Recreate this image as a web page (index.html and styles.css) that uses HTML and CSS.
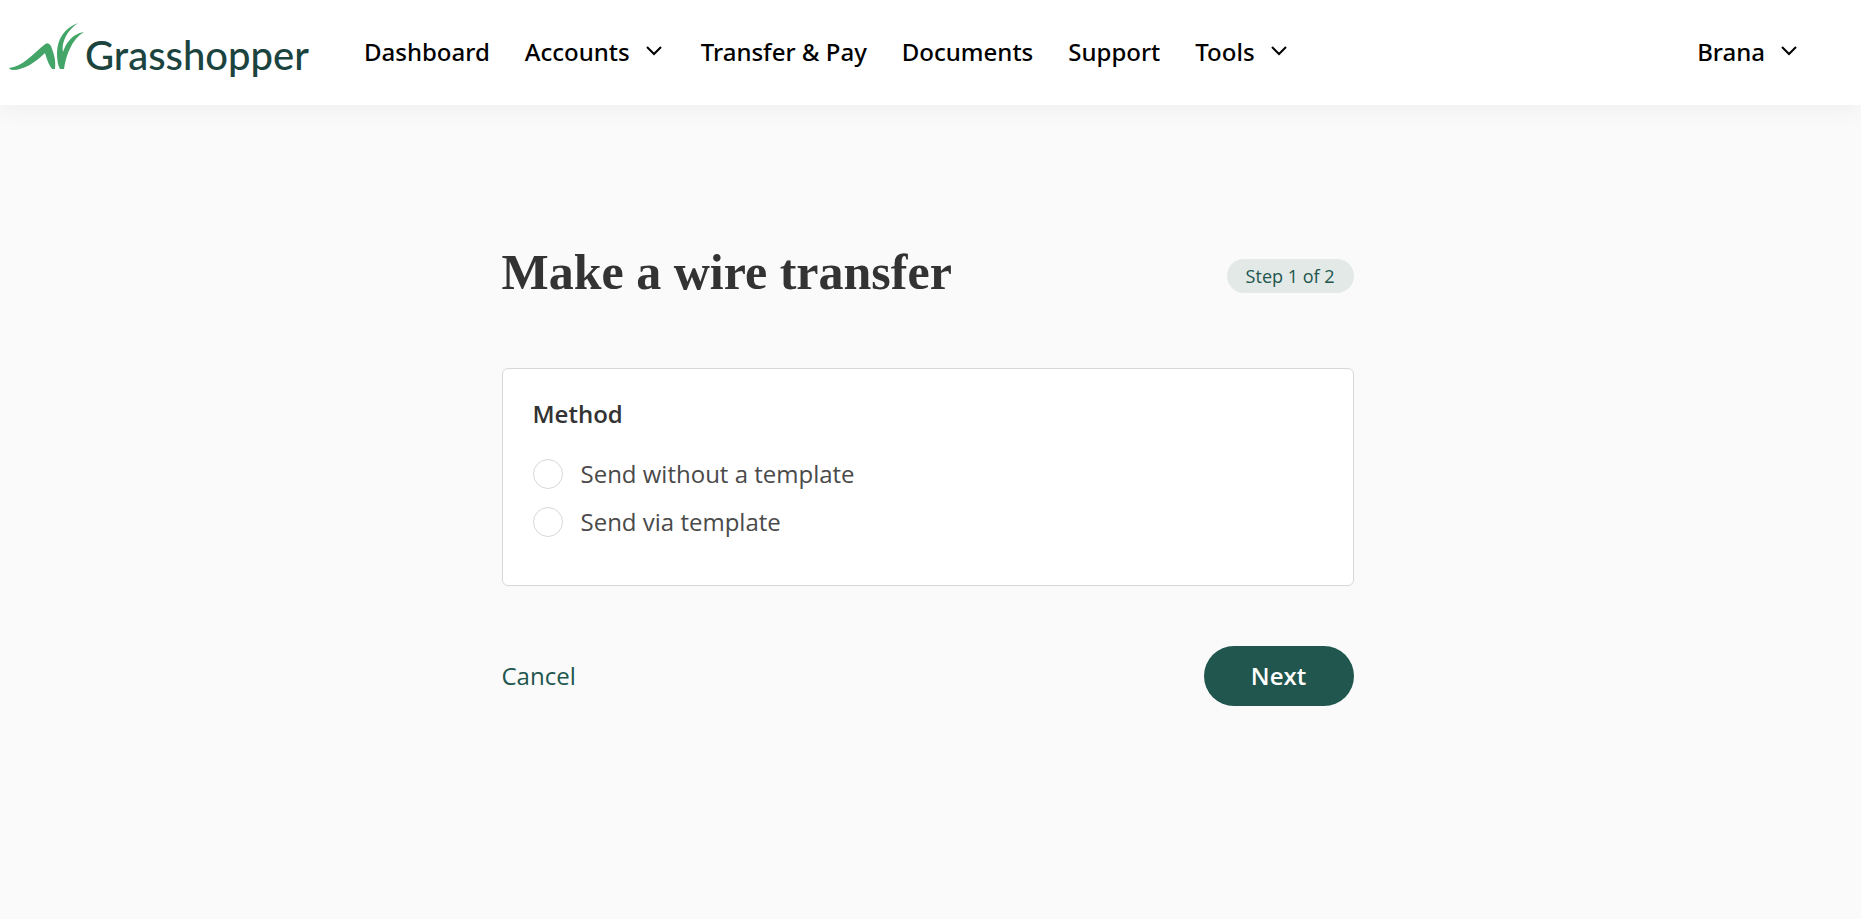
FILE: index.html
```
<!DOCTYPE html>
<html lang="en">
<head>
<meta charset="utf-8">
<title>Grasshopper - Make a wire transfer</title>
<link rel="stylesheet" href="styles.css">
</head>
<body>
<header class="header">
  <a class="logo" href="#" aria-label="Grasshopper">
    <svg class="logo-mark" viewBox="0 0 76 48" aria-hidden="true">
      <path d="M0 46C13 45 24 32 35 23Q39 19 42 24C45 32 47 38 46 47H43Q39 42 36 31C27 40 15 48 4 48Q1 48 0 46Z"/>
      <path d="M69 1C55 6 48 18 48 31Q48 42 51 47H55C57 33 63 17 75 10C63 12 57 21 54 30C52 22 57 9 69 1Z"/>
    </svg>
    <span class="logo-name">Grasshopper</span>
  </a>
  <nav class="nav" aria-label="Main">
    <a class="nav-item" href="#">Dashboard</a>
    <button class="nav-item nav-menu" type="button">Accounts<svg class="chevron" viewBox="0 0 24 24" aria-hidden="true"><path d="M5 7l7 7 7-7"/></svg></button>
    <a class="nav-item" href="#">Transfer &amp; Pay</a>
    <a class="nav-item" href="#">Documents</a>
    <a class="nav-item" href="#">Support</a>
    <button class="nav-item nav-menu" type="button">Tools<svg class="chevron" viewBox="0 0 24 24" aria-hidden="true"><path d="M5 7l7 7 7-7"/></svg></button>
  </nav>
  <button class="nav-item nav-menu" type="button">Brana<svg class="chevron" viewBox="0 0 24 24" aria-hidden="true"><path d="M5 7l7 7 7-7"/></svg></button>
</header>
<main class="main">
  <form class="wire">
    <div class="heading">
      <h1 class="title">Make a wire transfer</h1>
      <span class="step">Step 1 of 2</span>
    </div>
    <fieldset class="card" aria-labelledby="method">
      <h2 class="card-title" id="method">Method</h2>
      <label class="option"><input class="radio" type="radio" name="method" value="new">Send without a template</label>
      <label class="option"><input class="radio" type="radio" name="method" value="template">Send via template</label>
    </fieldset>
    <div class="actions">
      <a class="cancel" href="#">Cancel</a>
      <button class="next" type="submit">Next</button>
    </div>
  </form>
</main>
</body>
</html>
```
FILE: styles.css
```
* { box-sizing: border-box; }
body {
  margin: 0;
  min-height: 100vh;
  background: #fafafa;
  color: #333;
  font: 24px/32px "Open Sans", "Noto Sans", sans-serif;
}
a { text-decoration: none; }
button { font: inherit; cursor: pointer; }
.header {
  display: flex;
  align-items: center;
  height: 105px;
  padding: 0 60px 2px 9px;
  background: #fff;
  box-shadow: 0 4px 24px rgba(0, 0, 0, 0.05);
}
.logo {
  display: flex;
  align-items: center;
  width: 355px;
  color: #1c443f;
}
.logo-mark {
  width: 76px;
  height: 48px;
  margin-bottom: 12px;
  fill: #43a567;
  overflow: visible;
}
.logo-name {
  padding-top: 6px;
  font: 500 40px/48px Lato, sans-serif;
}
.nav {
  display: flex;
  flex: 1;
  gap: 35px;
}
.nav-item {
  color: #000;
  font-family: "Noto Sans", sans-serif;
  font-weight: 500;
  white-space: nowrap;
}
.nav-menu {
  display: flex;
  align-items: center;
  gap: 12px;
  padding: 0;
  border: 0;
  background: none;
}
.chevron {
  width: 24px;
  height: 24px;
  fill: none;
  stroke: #000;
  stroke-width: 2;
}
.main { padding: 135px 6px 0 0; }
.wire {
  max-width: 852px;
  margin: 0 auto;
}
.heading {
  display: flex;
  align-items: center;
  justify-content: space-between;
  margin-bottom: 64px;
}
.title {
  margin: 0;
  font: bold 50px/64px "Liberation Serif", serif;
}
.step {
  padding: 4px 19px;
  margin-top: 8px;
  border-radius: 17px;
  background: #e3e9e7;
  color: #20564d;
  font-size: 18px;
  line-height: 26px;
}
.card {
  display: flex;
  flex-direction: column;
  gap: 16px;
  margin: 0 0 60px;
  padding: 29px 30px 47px;
  border: 1px solid #d8d8d8;
  border-radius: 6px;
  background: #fff;
}
.card-title {
  margin: 0 0 12px;
  font-size: 24px;
  line-height: 32px;
  font-weight: 600;
}
.option {
  display: flex;
  align-items: center;
  gap: 18px;
  color: #4a4a4a;
}
.radio {
  appearance: none;
  width: 30px;
  height: 30px;
  margin: 0;
  border: 1px solid #d8d8d8;
  border-radius: 50%;
  background: #fff;
}
.radio:checked { border: 9px solid #20564d; }
.actions {
  display: flex;
  align-items: center;
  justify-content: space-between;
}
.cancel { color: #20564d; }
.next {
  width: 150px;
  height: 60px;
  border: 0;
  border-radius: 30px;
  background: #20564d;
  color: #fff;
  font-weight: 600;
}
```
